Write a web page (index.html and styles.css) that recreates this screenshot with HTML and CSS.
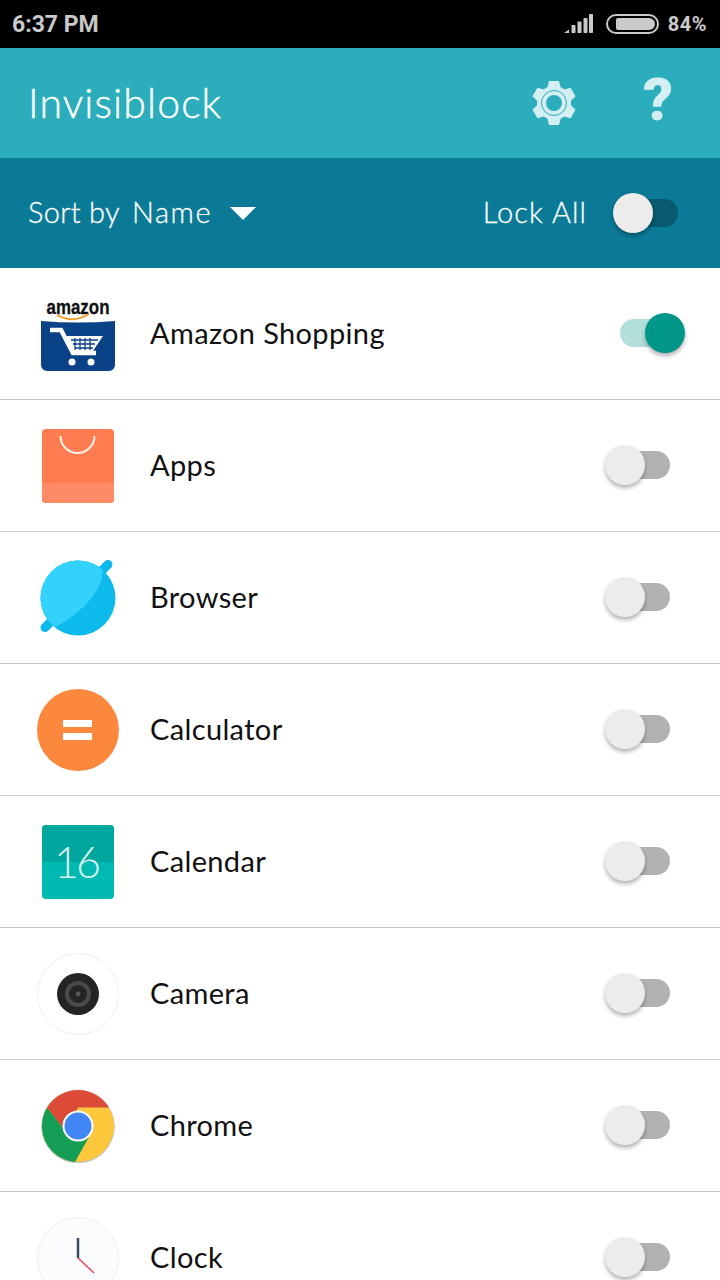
FILE: index.html
```html
<!DOCTYPE html>
<html>
<head>
    <meta charset="utf-8">
    <title>Invisiblock</title>
    <meta name="viewport" content="width=device-width, initial-scale=1">
    <link rel="stylesheet" href="styles.css">
</head>
<body>
    <div class="status-bar">
        <span class="status-time">6:37 PM</span>
        <div class="status-right">
            <svg class="signal" width="29" height="19" viewBox="0 0 29 19">
                <path d="M0 19 L5 15.5 V19 Z" />
                <rect x="7.5" y="11" width="4" height="8" rx="0.8" />
                <rect x="13.5" y="7.5" width="4" height="11.5" rx="0.8" />
                <rect x="19.5" y="4" width="4" height="15" rx="0.8" />
                <rect x="25" y="0" width="4" height="19" rx="0.8" />
            </svg>
            <div class="battery"><div class="battery-fill"></div></div>
            <span class="status-percent">84%</span>
        </div>
    </div>

    <header class="app-bar">
        <h1 class="app-title">Invisiblock</h1>
        <div class="app-actions">
            <svg class="gear" width="44" height="44" viewBox="0 0 44 44">
                <g fill="#d3eff3">
                    <circle cx="22" cy="22" r="17" />
                    <path d="M17 0 H27 L29 8 H15 Z" />
                    <path d="M17 0 H27 L29 8 H15 Z" transform="rotate(60 22 22)" />
                    <path d="M17 0 H27 L29 8 H15 Z" transform="rotate(120 22 22)" />
                    <path d="M17 0 H27 L29 8 H15 Z" transform="rotate(180 22 22)" />
                    <path d="M17 0 H27 L29 8 H15 Z" transform="rotate(240 22 22)" />
                    <path d="M17 0 H27 L29 8 H15 Z" transform="rotate(300 22 22)" />
                </g>
                <circle cx="22" cy="22" r="12.5" fill="none" stroke="#2badbc" stroke-width="1" />
                <circle cx="22" cy="22" r="8" fill="#2badbc" />
            </svg>
            <span class="help">?</span>
        </div>
    </header>

    <div class="sort-bar">
        <div class="sort-by">
            <span class="sort-label">Sort by</span>
            <span class="sort-label sort-name">Name</span>
            <span class="caret"></span>
        </div>
        <div class="lock-all">
            <span class="sort-label lock-label">Lock All</span>
            <div class="toggle toggle-dark"><div class="knob"></div></div>
        </div>
    </div>

    <ul class="app-list">
        <li class="app-row">
            <div class="app-icon">
                <svg width="74" height="82" viewBox="0 -4 74 82">
                    <path d="M0 24 Q37 27 74 24 V68 a6 6 0 0 1 -6 6 H6 a6 6 0 0 1 -6 -6 Z" fill="#0a4288" />
                    <text x="37" y="17" class="amazon-word" text-anchor="middle" textLength="63" lengthAdjust="spacingAndGlyphs">amazon</text>
                    <path d="M16 18 Q32 27 48 17" fill="none" stroke="#f2a02a" stroke-width="2" />
                    <path d="M9 33 H20 L32 56 H55" fill="none" stroke="#fff" stroke-width="4.5" />
                    <path d="M25 39 H62 L52 54 H31 Z" fill="#fff" />
                    <path d="M30 43 H57 M32 47 H54 M34 51 H52 M34 41 V53 M39 41 V53 M44 41 V53 M49 41 V53" stroke="#0a4288" stroke-width="1.3" />
                    <circle cx="31" cy="65" r="3.5" fill="#fff" />
                    <circle cx="50" cy="65" r="3.5" fill="#fff" />
                </svg>
            </div>
            <span class="app-name">Amazon Shopping</span>
            <div class="toggle toggle-on"><div class="knob"></div></div>
        </li>
        <li class="app-row">
            <div class="app-icon">
                <svg width="72" height="74" viewBox="0 0 72 74">
                    <rect width="72" height="74" rx="4" fill="#ff7b50" />
                    <path d="M0 54 H72 V70 a4 4 0 0 1 -4 4 H4 a4 4 0 0 1 -4 -4 Z" fill="#ff8a66" />
                    <path d="M18.5 7 a17 17 0 0 0 34 0" fill="none" stroke="#ffeee8" stroke-width="2" />
                </svg>
            </div>
            <span class="app-name">Apps</span>
            <div class="toggle"><div class="knob"></div></div>
        </li>
        <li class="app-row">
            <div class="app-icon">
                <svg width="76" height="76" viewBox="0 0 76 76">
                    <rect x="-12.5" y="31.5" width="98" height="9" rx="4.5" transform="rotate(-45 36.5 36)" fill="#0cb9eb" />
                    <circle cx="38" cy="38" r="37.5" fill="#0cbbec" />
                    <path d="M63 10.1 A37.5 37.5 0 0 0 11.5 11.5 A37.5 37.5 0 0 0 15 67.6 Q61 41 63 10.1 Z" fill="#33d2fd" />
                </svg>
            </div>
            <span class="app-name">Browser</span>
            <div class="toggle"><div class="knob"></div></div>
        </li>
        <li class="app-row">
            <div class="app-icon">
                <svg width="82" height="82" viewBox="0 0 82 82">
                    <circle cx="41" cy="41" r="41" fill="#fb883c" />
                    <rect x="26" y="31" width="29" height="7" fill="#fff" />
                    <rect x="26" y="44" width="29" height="7" fill="#fff" />
                </svg>
            </div>
            <span class="app-name">Calculator</span>
            <div class="toggle"><div class="knob"></div></div>
        </li>
        <li class="app-row">
            <div class="app-icon">
                <svg width="72" height="74" viewBox="0 0 72 74">
                    <rect width="72" height="74" rx="4" fill="#00b9b1" />
                    <path d="M0 37 V4 a4 4 0 0 1 4 -4 H68 a4 4 0 0 1 4 4 V37 Z" fill="#00a79f" />
                    <text x="34" y="53" class="calendar-day" text-anchor="middle">16</text>
                </svg>
            </div>
            <span class="app-name">Calendar</span>
            <div class="toggle"><div class="knob"></div></div>
        </li>
        <li class="app-row">
            <div class="app-icon">
                <svg width="82" height="82" viewBox="0 0 82 82">
                    <circle cx="41" cy="41" r="40.5" fill="#fff" stroke="#eeeeee" />
                    <circle cx="41" cy="41" r="21" fill="#232426" />
                    <circle cx="41" cy="41" r="11" fill="none" stroke="#4a4a4c" stroke-width="4" />
                    <circle cx="41" cy="41" r="2.5" fill="#555" />
                </svg>
            </div>
            <span class="app-name">Camera</span>
            <div class="toggle"><div class="knob"></div></div>
        </li>
        <li class="app-row">
            <div class="app-icon">
                <svg width="74" height="74" viewBox="0 0 74 74">
                    <circle cx="37" cy="37.5" r="36.8" fill="#c4c4c4" />
                    <circle cx="37" cy="37" r="36" fill="#fec83c" />
                    <path d="M6.1 18.5 L26 44 L48 48 L34 72.9 A36 36 0 0 1 6.1 18.5 Z" fill="#149d55" />
                    <path d="M6.1 18.5 A36 36 0 0 1 67.9 18.5 H37 L26 44 Z" fill="#db4b38" />
                    <circle cx="37" cy="37" r="15.5" fill="#fff" />
                    <circle cx="37" cy="37" r="13.5" fill="#4285f4" />
                </svg>
            </div>
            <span class="app-name">Chrome</span>
            <div class="toggle"><div class="knob"></div></div>
        </li>
        <li class="app-row">
            <div class="app-icon">
                <svg width="82" height="82" viewBox="0 0 82 82">
                    <circle cx="41" cy="41" r="40.5" fill="#fbfcfd" stroke="#eeeeee" />
                    <path d="M41 21 V41" stroke="#3b4a66" stroke-width="2.5" />
                    <path d="M41 41 L57 56" stroke="#e5475a" stroke-width="1.5" />
                </svg>
            </div>
            <span class="app-name">Clock</span>
            <div class="toggle"><div class="knob"></div></div>
        </li>
    </ul>
</body>
</html>
```

FILE: styles.css
```css
html, body {
    margin: 0;
    padding: 0;
    height: 1280px;
    overflow: hidden;
}
body {
    font-family: "Lato", "Open Sans", sans-serif;
    background: #fff;
    color: #111;
}
.status-bar {
    height: 48px;
    background: #000;
    color: #c9c9c9;
    display: flex;
    align-items: center;
    justify-content: space-between;
    padding: 0 13px 0 12px;
    box-sizing: border-box;
    font-family: "Roboto", sans-serif;
    font-weight: 700;
}
.status-time {
    font-size: 23px;
}
.status-right {
    display: flex;
    align-items: center;
}
.signal {
    fill: #c9c9c9;
    margin-right: 13px;
    margin-bottom: 2px;
}
.battery {
    width: 53px;
    height: 20px;
    border: 2px solid #c9c9c9;
    border-radius: 10px;
    padding: 2px 2px 2px 8px;
    box-sizing: border-box;
    display: flex;
    margin-right: 9px;
    margin-bottom: 1px;
}
.battery-fill {
    width: 39px;
    background: #c9c9c9;
    border-radius: 2px 6px 6px 2px;
}
.status-percent {
    font-size: 20px;
    letter-spacing: 0.5px;
}
.app-bar {
    height: 110px;
    background: #2badbc;
    display: flex;
    align-items: center;
    justify-content: space-between;
    padding: 0 47px 0 28px;
}
.app-title {
    margin: 0 0 2px;
    color: #fff;
    font-size: 41px;
    font-weight: 300;
    letter-spacing: 1.1px;
    -webkit-text-stroke: 0.4px #fff;
}
.app-actions {
    display: flex;
    align-items: center;
    gap: 67px;
}
.help {
    color: #d3eff3;
    font-family: "Roboto", sans-serif;
    font-weight: 900;
    font-size: 59px;
    line-height: 60px;
    margin-bottom: 6px;
}
.sort-bar {
    height: 110px;
    background: #0b7a97;
    color: #fff;
    font-size: 29px;
    font-weight: 300;
    display: flex;
    align-items: center;
    justify-content: space-between;
    padding: 0 42px 0 28px;
}
.sort-by {
    display: flex;
    align-items: center;
    gap: 12px;
}
.sort-label {
    margin-bottom: 3px;
    letter-spacing: 0.3px;
    -webkit-text-stroke: 0.3px #fff;
}
.sort-name {
    letter-spacing: 1.6px;
}
.lock-label {
    letter-spacing: 1.1px;
}
.caret {
    width: 0;
    height: 0;
    border-left: 13px solid transparent;
    border-right: 13px solid transparent;
    border-top: 13px solid #fff;
    margin-left: 6px;
}
.lock-all {
    display: flex;
    align-items: center;
    gap: 31px;
}
.app-list {
    list-style: none;
    margin: 0;
    padding: 0;
}
.app-row {
    height: 132px;
    box-sizing: border-box;
    border-bottom: 1px solid #c8c8c8;
    display: flex;
    align-items: center;
    padding: 0 50px 0 37px;
}
.app-icon {
    width: 82px;
    height: 82px;
    display: flex;
    align-items: center;
    justify-content: center;
    margin-right: 31px;
}
.app-name {
    flex: 1;
    font-size: 29px;
    letter-spacing: 0.35px;
    color: #111;
    margin-bottom: 2px;
}
.amazon-word {
    font-family: "Liberation Sans", sans-serif;
    font-weight: 700;
    font-size: 19.5px;
    fill: #111;
    stroke: #111;
    stroke-width: 0.3px;
}
.calendar-day {
    font-family: "Lato", sans-serif;
    font-weight: 300;
    font-size: 43px;
    letter-spacing: -3px;
    fill: #d8f5f2;
}
.toggle {
    position: relative;
    width: 60px;
    height: 28px;
    border-radius: 14px;
    background: #b2b2b2;
    margin-bottom: 2px;
}
.knob {
    position: absolute;
    top: -6px;
    left: -5px;
    width: 40px;
    height: 40px;
    border-radius: 50%;
    background: #ececec;
    box-shadow: 0 3px 4px rgba(0, 0, 0, 0.3);
}
.toggle-on {
    background: #b2dfdb;
    margin-right: -10px;
}
.toggle-on .knob {
    left: 25px;
    background: #009688;
}
.toggle-dark {
    background: #075a70;
    margin-bottom: 0;
}
```
